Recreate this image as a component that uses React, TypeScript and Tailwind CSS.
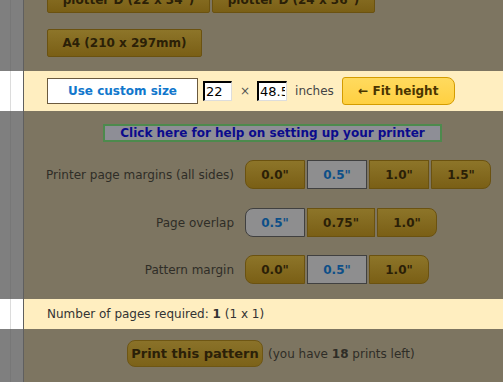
import React from "react";

type RowProps = {
  highlight?: boolean;
  className?: string;
  children: React.ReactNode;
};

// left gutter + content; highlighted rows sit above the dim overlay
function Row({ highlight, className = "", children }: RowProps) {
  return (
    <div className={`flex ${highlight ? "bg-[#ffeec0]" : "bg-[#7d7561]"}`}>
      <div
        className={`flex w-[24px] shrink-0 border-r border-[#5f5f5f] ${
          highlight ? "bg-white" : "bg-[#7f7f7f]"
        }`}
      >
        <div className="w-[10px]" />
        <div className={`w-px ${highlight ? "bg-[#dcdcdc]" : "bg-[#777]"}`} />
      </div>
      <div className={`flex-1 pl-[23px] ${className}`}>{children}</div>
    </div>
  );
}

type Opt = { label: string; w: string; selected?: boolean };

function OptGroup({ opts }: { opts: Opt[] }) {
  return (
    <div className="flex gap-[2px]">
      {opts.map((o, i) => {
        const first = i === 0;
        const last = i === opts.length - 1;
        const round = `${first ? "rounded-l-[8px]" : ""} ${last ? "rounded-r-[8px]" : ""}`;
        return (
          <div
            key={o.label}
            className={`flex h-[29px] items-center justify-center border text-[12px] font-bold ${o.w} ${round} ${
              o.selected
                ? "border-[#404040] bg-[#8e8e8f] text-[#0d4f88]"
                : "border-[#6b5210] bg-gradient-to-b from-[#8d7529] to-[#7a5f15] text-[#2b2007]"
            }`}
          >
            {o.label}
          </div>
        );
      })}
    </div>
  );
}

function OptRow({ label, opts, className = "" }: { label: string; opts: Opt[]; className?: string }) {
  return (
    <Row className={className}>
      <div className="flex items-center">
        <div className="flex w-[187px] justify-end whitespace-nowrap text-[12px] text-[#2f2d27]">
          {label}
        </div>
        <div className="ml-[11px]">
          <OptGroup opts={opts} />
        </div>
      </div>
    </Row>
  );
}

const goldBtn =
  "flex items-center justify-center border border-[#6b5210] bg-gradient-to-b from-[#8d7529] to-[#7a5f15] text-[12px] font-bold text-[#2b2007]";

const inputCls =
  "h-[20px] border-t-2 border-l-2 border-b border-r border-t-black border-l-black border-b-[#ddd] border-r-[#ddd] bg-white px-[1px] text-[13px] text-black outline-none";

export default function App() {
  return (
    <div
      className="h-[382px] w-[503px] overflow-hidden bg-[#7d7561]"
      style={{ fontFamily: '"DejaVu Sans", Verdana, sans-serif' }}
    >
      {/* paper size buttons */}
      <Row className="pb-[16px]">
        <div className="-mt-[14px] flex gap-[2px]">
          <div className={`${goldBtn} h-[27px] w-[163px] rounded-[2px]`}>plotter D (22 x 34")</div>
          <div className={`${goldBtn} h-[27px] w-[163px] rounded-[2px]`}>plotter D (24 x 36")</div>
        </div>
      </Row>
      <Row className="pb-[14px]">
        <div className={`${goldBtn} h-[28px] w-[155px] rounded-[2px]`}>A4 (210 x 297mm)</div>
      </Row>

      {/* custom size */}
      <Row highlight className="flex h-[40px] items-center">
        <div className="flex h-[26px] w-[151px] items-center justify-center border border-[#6b5a3e] bg-white text-[12px] font-bold text-[#1177cc]">
          Use custom size
        </div>
        <input readOnly value="22" className={`${inputCls} ml-[5px] w-[29px]`} />
        <span className="ml-[8px] text-[12px] text-[#555]">×</span>
        <input readOnly value="48.5" className={`${inputCls} ml-[7px] w-[30px]`} />
        <span className="ml-[8px] text-[12px] text-[#444]">inches</span>
        <div className="ml-[8px] flex h-[28px] w-[113px] items-center justify-center rounded-l-[3px] rounded-r-[8px] border border-[#d49c00] bg-gradient-to-b from-[#ffda5e] to-[#ffd040] text-[12px] font-bold text-[#4a3500]">
          ← Fit height
        </div>
      </Row>

      {/* help link */}
      <Row className="pt-[13px] pb-[18px]">
        <div className="ml-[56px] flex h-[18px] w-[339px] items-center justify-center border-2 border-[#4d8a4d] bg-[#8e8e96] text-[12px] font-bold text-[#0b0b8c]">
          Click here for help on setting up your printer
        </div>
      </Row>

      <OptRow
        className="pb-[19px]"
        label="Printer page margins (all sides)"
        opts={[
          { label: '0.0"', w: "w-[60px]" },
          { label: '0.5"', w: "w-[60px]", selected: true },
          { label: '1.0"', w: "w-[60px]" },
          { label: '1.5"', w: "w-[60px]" },
        ]}
      />
      <OptRow
        className="pb-[18px]"
        label="Page overlap"
        opts={[
          { label: '0.5"', w: "w-[60px]", selected: true },
          { label: '0.75"', w: "w-[68px]" },
          { label: '1.0"', w: "w-[60px]" },
        ]}
      />
      <OptRow
        className="pb-[15px]"
        label="Pattern margin"
        opts={[
          { label: '0.0"', w: "w-[60px]" },
          { label: '0.5"', w: "w-[60px]", selected: true },
          { label: '1.0"', w: "w-[60px]" },
        ]}
      />

      {/* pages required */}
      <Row highlight className="flex h-[30px] items-center text-[12px] text-[#333]">
        Number of pages required:&nbsp;<b>1</b>&nbsp;(1 x 1)
      </Row>

      {/* print */}
      <Row className="flex items-center pt-[11px] pb-[20px]">
        <div className="ml-[80px] flex h-[27px] w-[136px] items-center justify-center rounded-[8px] border border-[#6e5614] bg-gradient-to-b from-[#8a7229] to-[#7c6218] text-[13px] font-bold text-[#2b2008]">
          Print this pattern
        </div>
        <span className="ml-[5px] text-[12px] text-[#2f2d27]">
          (you have <b>18</b> prints left)
        </span>
      </Row>
    </div>
  );
}
